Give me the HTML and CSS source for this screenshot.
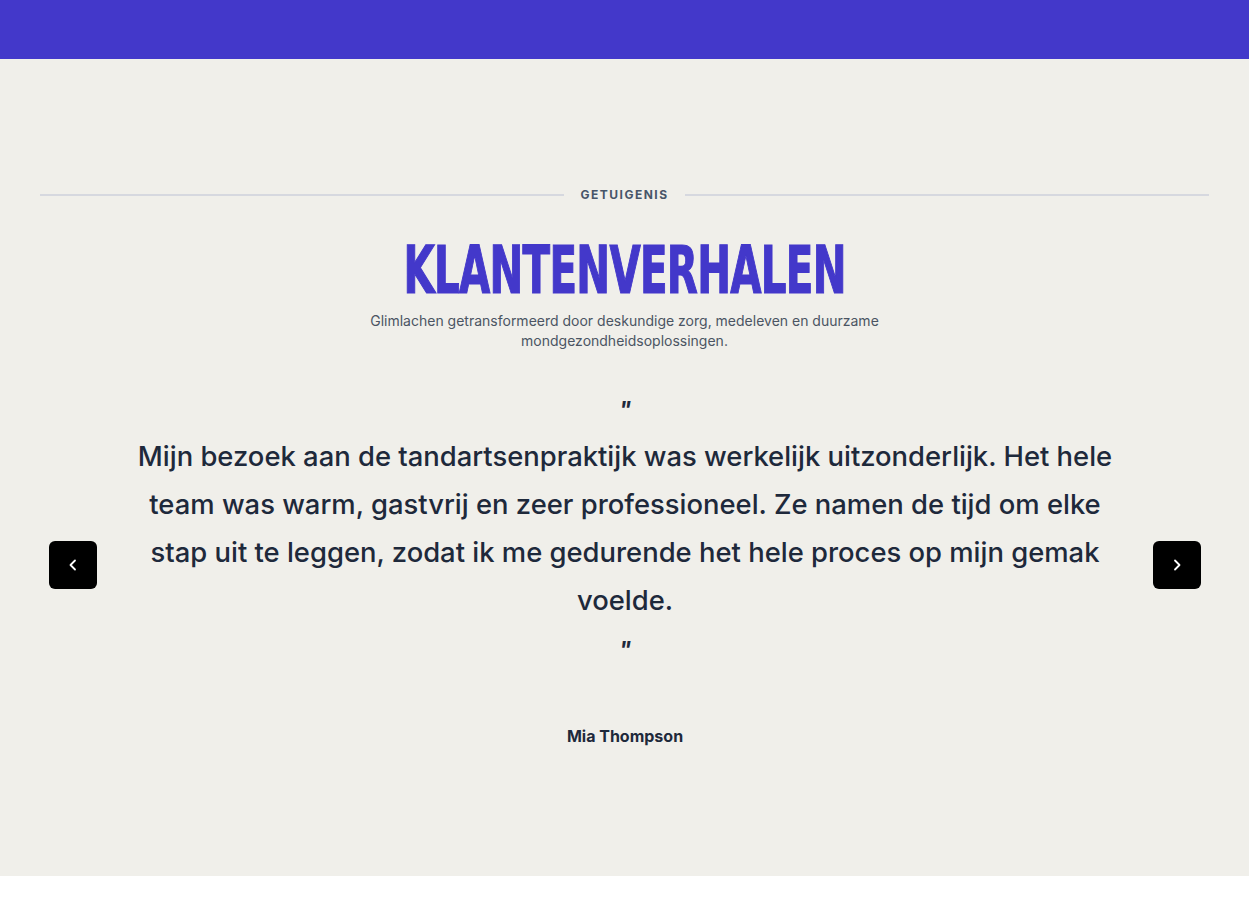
FILE: index.html
```html
<!DOCTYPE html>
<html lang="nl">
<head>
<meta charset="utf-8">
<title>Klantenverhalen</title>
<link rel="stylesheet" href="styles.css">
</head>
<body>
<header class="topbar"></header>
<section class="testimonials">
  <div class="eyebrow-row">
    <span class="rule"></span>
    <span class="eyebrow">GETUIGENIS</span>
    <span class="rule"></span>
  </div>
  <h1 class="title"><span class="title-text">KLANTENVERHALEN</span></h1>
  <p class="subtitle">Glimlachen getransformeerd door deskundige zorg, medeleven en duurzame mondgezondheidsoplossingen.</p>
  <div class="slider">
    <button class="nav" aria-label="Vorige">
      <svg width="16" height="16" viewBox="0 0 16 16"><path d="M10 3.5 5.5 8 10 12.5" fill="none" stroke="#fff" stroke-width="1.8" stroke-linecap="round" stroke-linejoin="round"/></svg>
    </button>
    <blockquote class="quote">
      <div class="mark">"</div>
      <p class="quote-text">Mijn bezoek aan de tandartsenpraktijk was werkelijk uitzonderlijk. Het hele team was warm, gastvrij en zeer professioneel. Ze namen de tijd om elke stap uit te leggen, zodat ik me gedurende het hele proces op mijn gemak voelde.</p>
      <div class="mark mark-close">"</div>
      <div class="author">Mia Thompson</div>
    </blockquote>
    <button class="nav" aria-label="Volgende">
      <svg width="16" height="16" viewBox="0 0 16 16"><path d="M6 3.5 10.5 8 6 12.5" fill="none" stroke="#fff" stroke-width="1.8" stroke-linecap="round" stroke-linejoin="round"/></svg>
    </button>
  </div>
</section>
</body>
</html>
```
FILE: styles.css
```css
* { box-sizing: border-box; }
html, body { margin: 0; padding: 0; background: #ffffff; }
body { font-family: Inter, "Noto Sans", sans-serif; color: #1e293b; }

.topbar { height: 59px; background: #4338ca; }

.testimonials {
  background: #f0efea;
  height: 817px;
  padding: 128px 40px 0;
}

.eyebrow-row {
  display: flex;
  align-items: center;
  gap: 16px;
}
.rule { flex: 1; height: 2px; background: #d6d8df; }
.eyebrow {
  font-size: 12px;
  line-height: 16px;
  font-weight: 700;
  letter-spacing: 1.5px;
  color: #475569;
}

.title {
  margin: 34px 0 0;
  text-align: center;
  font-family: "DejaVu Sans Condensed", "DejaVu Sans", sans-serif;
  font-weight: 700;
  font-size: 65px;
  line-height: 68px;
  color: #4338ca;
  letter-spacing: -1px;
}
.title-text {
  display: inline-block;
  transform: scaleX(0.69);
  -webkit-text-stroke: 1.2px #4338ca;
}

.subtitle {
  margin: 6px auto 0;
  max-width: 510px;
  text-align: center;
  font-size: 14px;
  line-height: 20px;
  color: #4b5563;
}

.slider {
  display: flex;
  align-items: center;
  margin: 46px 8px 0 9px;
}
.nav {
  flex: none;
  width: 48px;
  height: 48px;
  margin-bottom: 16px;
  border: none;
  border-radius: 6px;
  background: #000;
  display: flex;
  align-items: center;
  justify-content: center;
  padding: 0;
  cursor: pointer;
}
.quote {
  flex: 1;
  margin: 0;
  padding: 0 36px;
  text-align: center;
}
.mark {
  font-size: 22px;
  line-height: 24px;
  font-weight: 700;
  font-style: italic;
  color: #1e293b;
}
.mark-close { margin-top: 13px; }
.quote-text {
  margin: 11px 0 0;
  font-size: 27.4px;
  line-height: 48px;
  font-weight: 500;
  color: #1e293b;
}
.author {
  margin-top: 63px;
  font-size: 16px;
  line-height: 24px;
  font-weight: 700;
  color: #1e293b;
}
```
